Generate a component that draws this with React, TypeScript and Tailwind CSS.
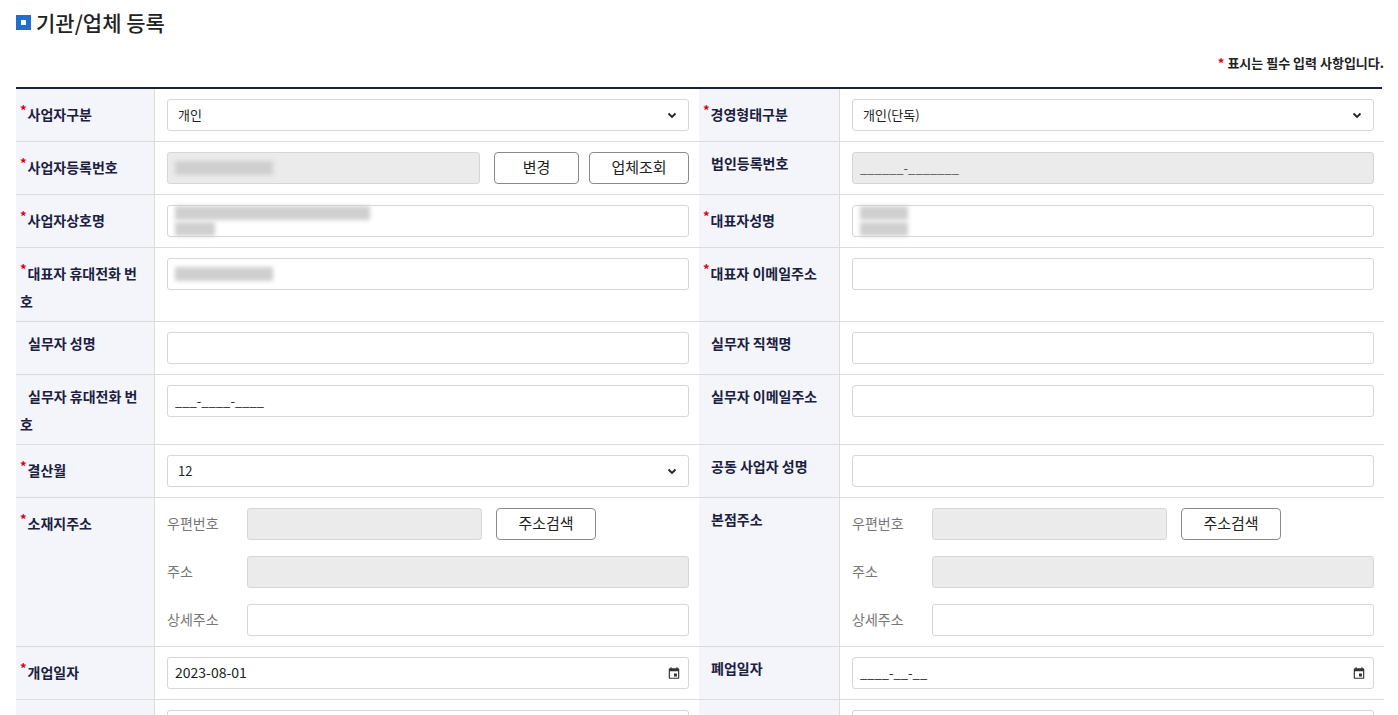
import React from "react";

const F = { fontFamily: '"Noto Sans CJK KR", "Noto Sans", sans-serif' };

function Label({ req, children }: { req?: boolean; children: React.ReactNode }) {
  return (
    <div className="bg-[#f3f5fa] border-b border-[#dcdcdc] pl-[4px] pr-[6px] pt-[7px] pb-[6px] text-[14px] font-bold text-[#1b2040] leading-[28px] min-h-[53px]">
      {req ? <span className="text-[#d9001b] text-[13px] align-[5px] mr-[1px]">*</span> : <span className="inline-block w-[8px]" />}
      {children}
    </div>
  );
}

function Cell({ children, className = "" }: { children?: React.ReactNode; className?: string }) {
  return <div className={"border-b border-[#dcdcdc] border-l border-l-[#dcdcdc] pl-[12px] pr-[10px] pt-[10px] pb-[10px] min-h-[53px] " + className}>{children}</div>;
}

function Input({ gray, value, className = "", icon }: { gray?: boolean; value?: React.ReactNode; className?: string; icon?: boolean }) {
  return (
    <div className={"h-[32px] rounded-[3px] border border-[#d6d6d6] flex items-center px-[7px] text-[14px] text-[#222] " + (gray ? "bg-[#ebebeb] " : "bg-white ") + className}>
      <span className="flex-1">{value}</span>
      {icon && (
        <svg width="14" height="14" viewBox="0 0 24 24" fill="#333"><path d="M19 4h-1V2h-2v2H8V2H6v2H5a2 2 0 0 0-2 2v14a2 2 0 0 0 2 2h14a2 2 0 0 0 2-2V6a2 2 0 0 0-2-2zm0 16H5V9h14v11zM12 13h5v5h-5z" /></svg>
      )}
    </div>
  );
}

function Select({ value }: { value: string }) {
  return (
    <div className="h-[32px] rounded-[3px] border border-[#d6d6d6] flex items-center px-[10px] text-[13px] text-[#222] bg-white">
      <span className="flex-1">{value}</span>
      <svg width="12" height="12" viewBox="0 0 12 12"><path d="M2.5 4.5 6 8l3.5-3.5" stroke="#222" strokeWidth="1.8" fill="none" /></svg>
    </div>
  );
}

function Btn({ children, w }: { children: React.ReactNode; w: string }) {
  return (
    <div className={"h-[32px] rounded-[4px] border border-[#8a8a8a] bg-white flex items-center justify-center text-[15px] text-[#222] shrink-0 " + w}>
      {children}
    </div>
  );
}

function Blur({ w }: { w: number }) {
  return <div className="h-[14px] bg-[#cfcfcf] blur-[2px]" style={{ width: w }} />;
}

function Address() {
  const rows: [string, boolean, boolean][] = [["우편번호", true, true], ["주소", true, false], ["상세주소", false, false]];
  return (
    <div className="flex flex-col gap-[16px]">
      {rows.map(([l, g, b]) => (
        <div key={l} className="flex items-center">
          <span className="w-[80px] text-[14px] text-[#777] shrink-0">{l}</span>
          {b ? (
            <div className="flex gap-[14px] items-center">
              <Input gray className="w-[235px]" />
              <Btn w="w-[100px]">주소검색</Btn>
            </div>
          ) : (
            <Input gray={g} className="flex-1" />
          )}
        </div>
      ))}
    </div>
  );
}

export default function App() {
  return (
    <div className="bg-white w-[1398px] h-[715px] overflow-hidden" style={F}>
      <div className="flex items-center gap-[5px] pl-[16px] pt-[9px]">
        <div className="w-[15px] h-[15px] bg-[#1f6fd1] flex items-center justify-center"><div className="w-[5px] h-[5px] bg-white" /></div>
        <span className="text-[21px] font-medium text-[#222] leading-[26px]">기관/업체 등록</span>
      </div>
      <div className="text-right pr-[14px] mt-[18px] text-[13px] font-bold text-[#222]"><span className="text-[#d9001b]">*</span> 표시는 필수 입력 사항입니다.</div>
      <div className="mx-[16px] mt-[14px] border-t-2 border-[#1a2238] grid grid-cols-[138px_545px_140px_545px]">
        <Label req>사업자구분</Label>
        <Cell><Select value="개인" /></Cell>
        <Label req>경영형태구분</Label>
        <Cell><Select value="개인(단독)" /></Cell>

        <Label req>사업자등록번호</Label>
        <Cell>
          <div className="flex gap-[10px]">
            <Input gray className="w-[314px]" value={<Blur w={98} />} />
            <Btn w="w-[85px] ml-[4px]">변경</Btn>
            <Btn w="w-[100px]">업체조회</Btn>
          </div>
        </Cell>
        <Label>법인등록번호</Label>
        <Cell><Input gray value={<span className="text-[#555] text-[13px]">______-_______</span>} /></Cell>

        <Label req>사업자상호명</Label>
        <Cell><Input value={<div className="flex flex-col gap-[2px]"><Blur w={195} /><Blur w={40} /></div>} /></Cell>
        <Label req>대표자성명</Label>
        <Cell><Input value={<div className="flex flex-col gap-[2px]"><Blur w={48} /><Blur w={48} /></div>} /></Cell>

        <Label req>대표자 휴대전화 번호</Label>
        <Cell><Input value={<Blur w={98} />} /></Cell>
        <Label req>대표자 이메일주소</Label>
        <Cell><Input /></Cell>

        <Label>실무자 성명</Label>
        <Cell><Input /></Cell>
        <Label>실무자 직책명</Label>
        <Cell><Input /></Cell>

        <Label>실무자 휴대전화 번호</Label>
        <Cell><Input value={<span className="text-[13px]">___-____-____</span>} /></Cell>
        <Label>실무자 이메일주소</Label>
        <Cell><Input /></Cell>

        <Label req>결산월</Label>
        <Cell><Select value="12" /></Cell>
        <Label>공동 사업자 성명</Label>
        <Cell><Input /></Cell>

        <Label req>소재지주소</Label>
        <Cell><Address /></Cell>
        <Label>본점주소</Label>
        <Cell><Address /></Cell>

        <Label req>개업일자</Label>
        <Cell><Input value="2023-08-01" icon /></Cell>
        <Label>폐업일자</Label>
        <Cell><Input value={<span className="text-[13px]">____-__-__</span>} icon /></Cell>

        <Label> </Label>
        <Cell><Input /></Cell>
        <Label> </Label>
        <Cell><Input /></Cell>
      </div>
    </div>
  );
}
